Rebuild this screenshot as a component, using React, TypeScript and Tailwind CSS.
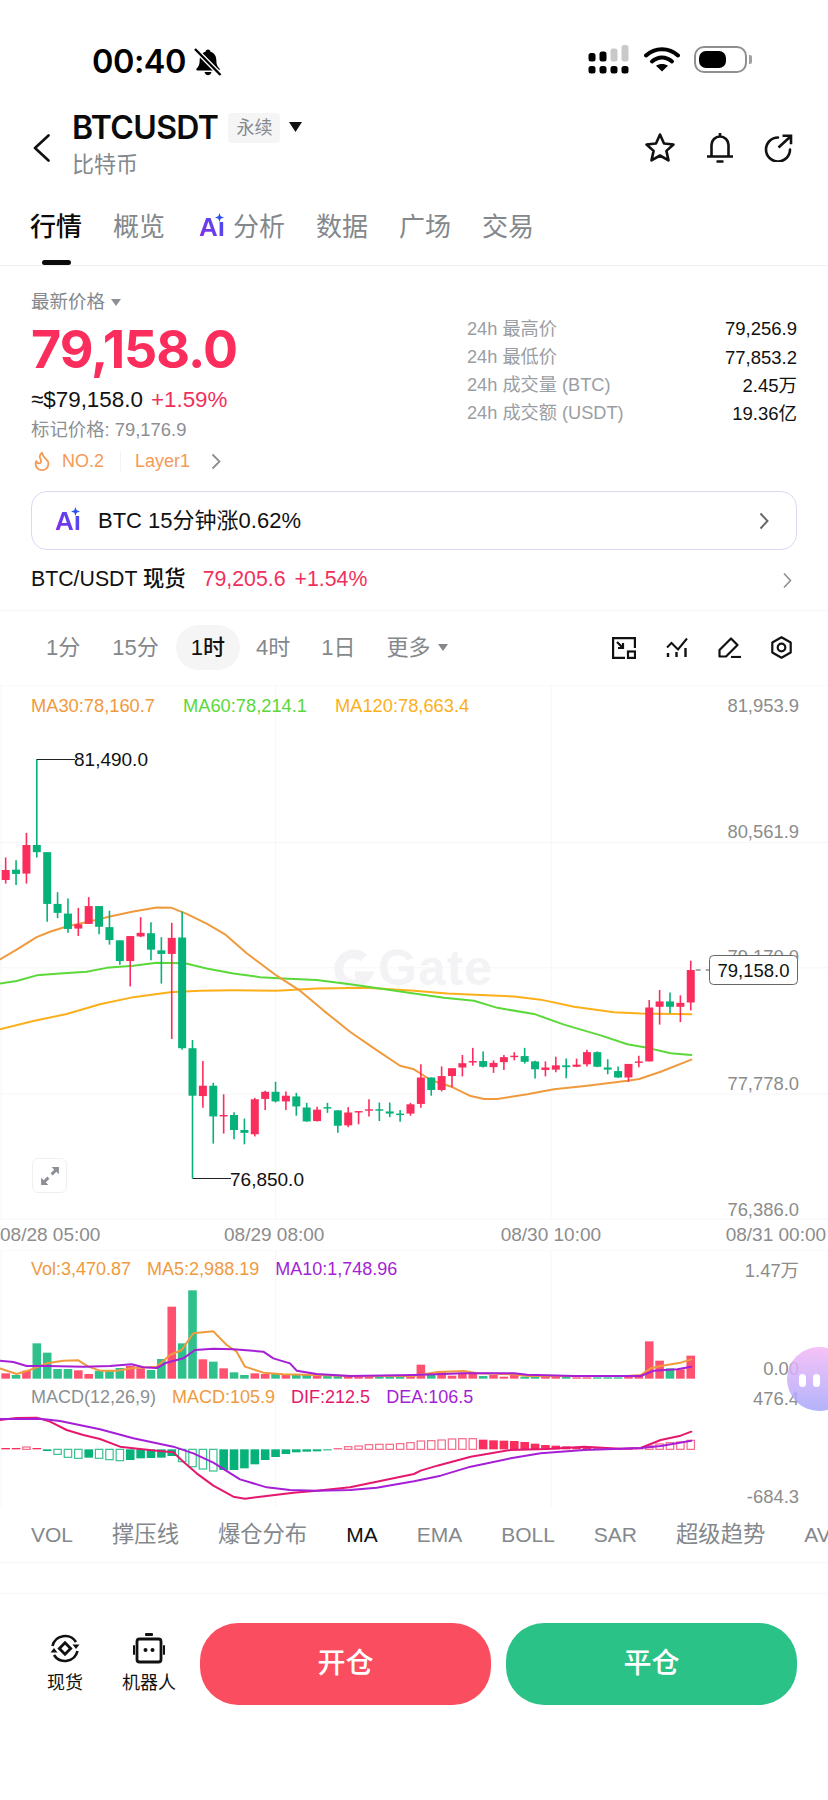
import { Flame } from 'lucide-react';

type Candle = [number, number, number, number, 'r' | 'g'];
type Pt = [number, number];

const RED = '#fb2d5c';
const GREEN = '#06b279';
const ORANGE = '#f09a3e';
const LIME = '#5bd83a';
const AMBER = '#fbb01a';
const PURPLE = '#a51fd6';
const PINK = '#e6186d';

// x position shared by candles and the bars under them
const cx = (i: number) => 5.67 + 10.38 * i;
const cy = (v: number) => 680 + v / 2.8;
const sy = (v: number) => 1240 + v / 3;

const candles: Candle[] = [
  [532, 560, 497, 570, 'r'], [531, 543, 505, 574, 'g'], [462, 542, 428, 570, 'r'], [462, 482, 222, 497, 'g'],
  [482, 627, 482, 677, 'g'], [627, 652, 594, 667, 'g'], [654, 697, 612, 708, 'g'], [684, 696, 638, 717, 'r'],
  [633, 683, 608, 683, 'r'], [633, 691, 633, 712, 'g'], [692, 728, 646, 741, 'g'], [729, 787, 729, 797, 'g'],
  [717, 787, 717, 858, 'r'], [708, 718, 664, 720, 'r'], [709, 755, 678, 785, 'g'], [757, 767, 720, 850, 'g'],
  [722, 767, 680, 1005, 'r'], [721, 1031, 648, 1035, 'g'], [1031, 1164, 1008, 1396, 'g'], [1136, 1165, 1067, 1198, 'r'],
  [1136, 1222, 1128, 1298, 'g'], [1218, 1222, 1160, 1270, 'r'], [1218, 1260, 1210, 1286, 'g'], [1260, 1268, 1228, 1300, 'g'],
  [1174, 1272, 1170, 1278, 'r'], [1153, 1173, 1150, 1204, 'r'], [1153, 1180, 1125, 1183, 'g'], [1164, 1180, 1152, 1204, 'r'],
  [1166, 1194, 1156, 1220, 'g'], [1197, 1236, 1184, 1237, 'g'], [1203, 1235, 1195, 1236, 'r'], [1196, 1200, 1184, 1212, 'g'],
  [1205, 1248, 1205, 1268, 'g'], [1211, 1247, 1196, 1252, 'r'], [1207, 1211, 1207, 1244, 'r'], [1202, 1206, 1174, 1222, 'r'],
  [1202, 1206, 1183, 1235, 'g'], [1208, 1214, 1183, 1224, 'g'], [1214, 1218, 1204, 1237, 'g'], [1188, 1214, 1184, 1220, 'r'],
  [1113, 1187, 1076, 1198, 'r'], [1113, 1148, 1113, 1164, 'g'], [1109, 1148, 1082, 1152, 'r'], [1087, 1109, 1087, 1140, 'r'],
  [1073, 1085, 1050, 1110, 'r'], [1067, 1071, 1030, 1080, 'r'], [1067, 1083, 1040, 1085, 'g'], [1072, 1084, 1065, 1100, 'r'],
  [1056, 1070, 1050, 1092, 'r'], [1052, 1056, 1042, 1065, 'r'], [1053, 1069, 1030, 1074, 'g'], [1068, 1090, 1066, 1116, 'g'],
  [1085, 1092, 1068, 1110, 'r'], [1079, 1091, 1055, 1098, 'r'], [1079, 1084, 1060, 1115, 'g'], [1077, 1083, 1060, 1084, 'r'],
  [1042, 1076, 1035, 1082, 'r'], [1042, 1083, 1040, 1084, 'g'], [1085, 1091, 1062, 1104, 'g'], [1095, 1113, 1082, 1114, 'g'],
  [1075, 1113, 1075, 1125, 'r'], [1068, 1072, 1052, 1084, 'r'], [917, 1068, 896, 1068, 'r'], [900, 915, 868, 965, 'r'],
  [900, 915, 875, 933, 'g'], [904, 915, 883, 958, 'r'], [812, 903, 786, 925, 'r'],
];

const ma30: Pt[] = [[0,782],[50,755],[110,720],[150,705],[200,690],[260,678],[330,662],[400,648],[470,637],[515,638],[560,655],[620,682],[675,712],[740,765],[830,828],[900,870],[970,925],[1050,985],[1120,1030],[1200,1080],[1242,1090],[1292,1120],[1352,1138],[1412,1165],[1452,1173],[1492,1173],[1582,1160],[1662,1146],[1762,1136],[1882,1122],[1918,1117],[1982,1097],[2074,1063]];
const ma60: Pt[] = [[0,850],[50,843],[110,827],[180,822],[260,817],[320,806],[400,800],[470,792],[555,793],[620,808],[700,822],[780,832],[850,836],[950,840],[1050,852],[1150,865],[1242,878],[1332,890],[1422,898],[1492,918],[1602,935],[1692,965],[1802,995],[1882,1020],[1942,1030],[2012,1045],[2074,1050]];
const ma120: Pt[] = [[0,978],[100,955],[200,935],[300,908],[400,888],[510,874],[600,870],[700,869],[830,870],[950,864],[1100,862],[1242,870],[1342,878],[1442,882],[1542,886],[1622,895],[1722,915],[1842,930],[1922,934],[2074,936]];

const vols: [number, 'r' | 'g'][] = [
  [400,'r'],[405,'g'],[392,'r'],[310,'g'],[338,'g'],[387,'g'],[387,'g'],[391,'r'],[402,'r'],[392,'g'],[392,'g'],[384,'g'],[378,'r'],[385,'r'],[390,'g'],[357,'g'],[200,'r'],[310,'g'],[151,'g'],[358,'r'],[365,'g'],[385,'r'],[397,'g'],[405,'g'],[400,'r'],[402,'r'],[400,'g'],[402,'r'],[405,'g'],[405,'g'],[408,'r'],[408,'g'],[408,'g'],[408,'r'],[408,'r'],[408,'r'],[410,'g'],[410,'g'],[410,'g'],[408,'r'],
  [374,'r'],[402,'g'],[395,'r'],[407,'r'],[398,'r'],[398,'r'],[408,'g'],[405,'r'],[410,'r'],[405,'r'],[410,'g'],[410,'g'],[408,'r'],[408,'r'],[408,'g'],[412,'r'],[412,'r'],[412,'g'],[412,'g'],[412,'g'],[408,'r'],[408,'r'],[304,'r'],[362,'r'],[385,'g'],[388,'r'],[347,'r'],
];
const volMa5: Pt[] = [[0,385],[50,402],[90,390],[140,370],[190,362],[235,361],[265,380],[300,392],[350,392],[400,384],[470,380],[510,345],[545,330],[580,280],[640,274],[680,315],[710,335],[735,380],[790,398],[850,403],[950,405],[1050,408],[1242,408],[1312,396],[1392,393],[1432,400],[1542,403],[1582,408],[1882,408],[1922,405],[1952,385],[1982,378],[2042,368],[2074,358]];
const volMa10: Pt[] = [[0,362],[40,366],[80,378],[140,378],[250,380],[330,378],[395,373],[430,382],[470,384],[500,368],[550,355],[585,330],[640,326],[700,328],[790,335],[820,355],[870,370],[890,392],[950,402],[1050,408],[1242,405],[1392,400],[1542,400],[1582,404],[1722,408],[1922,408],[1962,392],[2032,388],[2074,380]];

// [zoomed y of the bar's far end, hollow]
const macdBars: [number, boolean][] = [
  [624,false],[624,false],[621,true],[624,false],[633,false],[643,true],[652,true],[655,true],[653,false],[655,true],[659,true],[662,true],[660,false],[655,false],[654,false],[653,false],[648,false],[665,true],[680,true],[687,true],[693,true],[690,false],[690,false],[685,false],[673,false],[660,false],[651,false],[642,false],[637,false],[635,false],[634,false],[630,false],[625,false],[620,true],[618,true],[614,true],[613,true],[613,true],[611,true],[608,true],
  [603,true],[602,true],[600,true],[597,true],[596,true],[596,true],[599,false],[601,false],[602,false],[603,false],[606,false],[611,false],[615,false],[617,false],[619,false],[622,false],[623,false],[625,false],[626,false],[626,false],[626,false],[625,false],[618,true],[612,true],[608,true],[606,true],[601,true],
];
const dif: Pt[] = [[0,540],[50,534],[110,533],[150,545],[200,570],[250,585],[300,597],[360,620],[420,627],[470,632],[520,637],[550,665],[590,700],[640,737],[700,770],[735,776],[800,768],[880,758],[950,752],[1050,742],[1130,725],[1242,702],[1262,692],[1312,677],[1412,650],[1532,630],[1642,627],[1752,620],[1862,626],[1922,624],[1982,600],[2042,587],[2074,575]];
const dea: Pt[] = [[0,537],[120,536],[180,543],[300,568],[400,595],[520,620],[580,640],[640,668],[720,718],[800,742],[870,750],[950,752],[1050,750],[1130,743],[1242,724],[1322,707],[1412,680],[1532,655],[1622,640],[1752,630],[1862,626],[1922,624],[1982,618],[2074,602]];

const toPoints = (pts: Pt[], my: (v: number) => number) => pts.map(([x, v]) => `${x / 3},${my(v)}`).join(' ');

function Line({ pts, color, my }: { pts: Pt[]; color: string; my: (v: number) => number }) {
  return <polyline points={toPoints(pts, my)} fill="none" stroke={color} strokeWidth={2} strokeLinejoin="round" strokeLinecap="round" />;
}

function AxisLabel({ y, children }: { y: number; children: string }) {
  return (
    <text x={799} y={y + 6.5} textAnchor="end" fontSize={18.4} fill="#8c8c8c">
      {children}
    </text>
  );
}

function TimeLabel({ x, children }: { x: number; children: string }) {
  return (
    <text x={x} y={1241} fontSize={19} fill="#8c8c8c">
      {children}
    </text>
  );
}

function GridV({ y1, y2 }: { y1: number; y2: number }) {
  return (
    <>
      <line x1={1} x2={1} y1={y1} y2={y2} stroke="#f6f6f8" />
      <line x1={275.7} x2={275.7} y1={y1} y2={y2} stroke="#f6f6f8" />
      <line x1={551} x2={551} y1={y1} y2={y2} stroke="#f6f6f8" />
    </>
  );
}

function AiMark() {
  return (
    <span className="relative inline-block w-[25px] h-[30px] shrink-0">
      <span className="text-[26px] leading-[30px] font-bold bg-linear-to-tr from-[#8a1fe6] to-[#2a50f0] bg-clip-text text-transparent">Aı</span>
      <svg className="absolute right-0 top-[1px]" width="9" height="9" viewBox="0 0 10 10">
        <path d="M5 0 6.3 3.7 10 5 6.3 6.3 5 10 3.7 6.3 0 5 3.7 3.7Z" fill="#2a50f0" />
      </svg>
    </span>
  );
}

function StatusBar() {
  return (
    <div className="h-[104px] pt-[44px] pl-[92px] pr-[76px] flex justify-between items-start">
      <div className="h-[36px] flex items-center">
        <span className="font-['Inter'] text-[32.500px] font-semibold tracking-[-0.5px] text-black">00:40</span>
        <svg className="ml-[8px]" width="28" height="28" viewBox="0 0 28 28">
          <path d="M14 1.5c1.5 0 2.3 1 2.5 2.2 4 1.2 5.8 4.5 5.8 8.3 0 4.5 1 6.5 3.2 8.8.6.7.2 1.7-.8 1.7H3.3c-1 0-1.4-1-.8-1.7C4.700 18.500 5.700 16.500 5.700 12c0-3.800 1.800-7.100 5.800-8.300C11.700 2.500 12.500 1.500 14 1.500Z" fill="#000" />
          <path d="M10.500 24h7c-.4 2-1.800 3.200-3.500 3.200s-3.100-1.200-3.500-3.200Z" fill="#000" />
          <path d="M1.500 1.500 26 26.500" stroke="#fff" strokeWidth="5" />
          <path d="M1 1 26.500 27" stroke="#000" strokeWidth="2.400" />
        </svg>
      </div>
      <div className="h-[30px] flex items-center">
        <svg width="41" height="29" viewBox="0 0 41 29">
          <rect x="0.500" y="8" width="7" height="8.500" rx="2.500" fill="#000" />
          <rect x="11.500" y="6.500" width="7" height="10" rx="2.500" fill="#000" />
          <rect x="22.500" y="3.500" width="7" height="13" rx="2.500" fill="#c9c9c9" />
          <rect x="33.500" y="0" width="7" height="16.500" rx="2.500" fill="#c9c9c9" />
          <rect x="0.500" y="21" width="7" height="7.500" rx="2.500" fill="#000" />
          <rect x="11.500" y="21" width="7" height="7.500" rx="2.500" fill="#000" />
          <rect x="22.500" y="21" width="7" height="7.500" rx="2.500" fill="#000" />
          <rect x="33.500" y="21" width="7" height="7.500" rx="2.500" fill="#000" />
        </svg>
        <svg className="ml-[15px]" width="36" height="26" viewBox="0 0 36 26">
          <path d="M2 9.500C11 1 25 1 34 9.500" fill="none" stroke="#000" strokeWidth="4" strokeLinecap="round" />
          <path d="M8 15.500C14 10 22 10 28 15.500" fill="none" stroke="#000" strokeWidth="4" strokeLinecap="round" />
          <path d="M18 25.500 12 19.800C15.500 17.300 20.500 17.300 24 19.800Z" fill="#000" />
        </svg>
        <div className="ml-[14px] w-[53px] h-[27px] rounded-[10px] border-[2px] border-[#8f8f8f] p-[3px]">
          <div className="w-[27px] h-full rounded-[7px] bg-black" />
        </div>
        <div className="ml-[2px] w-[3px] h-[9px] rounded-r-[2px] bg-[#a0a0a0]" />
      </div>
    </div>
  );
}

function Header() {
  return (
    <div className="h-[76px] flex items-start pl-[33px] pr-[35px]">
      <svg className="mt-[30px]" width="17" height="28" viewBox="0 0 17 28">
        <path d="M15.500 1.500 2 14l13.500 12.500" fill="none" stroke="#111" strokeWidth="2.600" strokeLinecap="round" strokeLinejoin="round" />
      </svg>
      <div className="ml-[22px] mt-[9px]">
        <div className="flex items-center h-[30px]">
          <span className="font-['Inter'] text-[32px] font-semibold tracking-[-0.6px] text-[#0b0b0b] leading-[30px]">BTCUSDT</span>
          <span className="ml-[10px] w-[52px] h-[30px] rounded-[4px] bg-[#f5f5f5] text-[#84888c] text-[18px] flex items-center justify-center">永续</span>
          <svg className="ml-[9px] mb-[3px]" width="13" height="10" viewBox="0 0 13 10"><path d="M0 0h13L6.500 10Z" fill="#111" /></svg>
        </div>
        <div className="mt-[9px] text-[22px] leading-[26px] text-[#84888c]">比特币</div>
      </div>
      <div className="ml-auto mt-[28px] flex items-center gap-[30px]">
        <svg width="32" height="31" viewBox="0 0 32 31">
          <path d="M16 2.500 20 11.500l9.500 1-7.100 6.400 2.100 9.500L16 23.500l-8.500 4.900 2.100-9.500L2.500 12.500l9.500-1Z" fill="none" stroke="#111" strokeWidth="2.600" strokeLinejoin="round" />
        </svg>
        <svg width="28" height="31" viewBox="0 0 28 31">
          <path d="M5.500 24V13a8.500 8.500 0 0 1 17 0v11" fill="none" stroke="#111" strokeWidth="2.600" />
          <path d="M1 24.500h26M10.500 29.500h7M14 1v3" stroke="#111" strokeWidth="2.600" />
        </svg>
        <svg width="29" height="28" viewBox="0 0 29 28">
          <path d="M14 3.500A12 12 0 1 0 26 15.500" fill="none" stroke="#111" strokeWidth="2.600" strokeLinecap="round" />
          <path d="M14.500 13.500 26.500 2.500M18.500 1.800h8.500v8.500" fill="none" stroke="#111" strokeWidth="2.600" />
        </svg>
      </div>
    </div>
  );
}

function Tabs() {
  const cls = 'text-[26px] leading-[34px] text-[#84888c]';
  return (
    <div className="h-[86px] pt-[30px] pl-[30px] flex items-start gap-[31px] border-b border-[#f0f0f0]">
      <div className="flex flex-col items-center">
        <span className="text-[26px] leading-[34px] font-medium text-[#0b0b0b]">行情</span>
        <span className="mt-[16px] w-[29px] h-[5px] rounded-[3px] bg-[#0b0b0b]" />
      </div>
      <span className={cls}>概览</span>
      <span className="ml-[3px] flex items-center gap-[9px]">
        <AiMark />
        <span className={cls}>分析</span>
      </span>
      <span className={cls}>数据</span>
      <span className={cls}>广场</span>
      <span className={cls}>交易</span>
    </div>
  );
}

function PriceSection() {
  const stats = [
    ['24h 最高价', '79,256.9'],
    ['24h 最低价', '77,853.2'],
    ['24h 成交量 (BTC)', '2.45万'],
    ['24h 成交额 (USDT)', '19.36亿'],
  ];
  return (
    <div className="px-[31px] pb-[18px] flex justify-between">
      <div className="pt-[24px]">
        <div className="h-[24px] flex items-center text-[18.500px] text-[#84888c]">
          最新价格
          <svg className="ml-[6px]" width="10" height="7" viewBox="0 0 10 7"><path d="M0 0h10L5 7Z" fill="#8c8f93" /></svg>
        </div>
        <div className="mt-[8px] h-[56px] font-['Inter'] text-[52px] leading-[56px] font-bold tracking-[-1px] text-[#fb2d5c]">79,158.0</div>
        <div className="mt-[8px] h-[28px] text-[22.400px] leading-[28px] flex items-center gap-[8px]">
          <span className="text-[#111]">≈$79,158.0</span>
          <span className="text-[#f0305c]">+1.59%</span>
        </div>
        <div className="mt-[4px] h-[24px] text-[18.400px] leading-[24px] text-[#8c8f93]">标记价格: 79,176.9</div>
        <div className="mt-[7px] h-[24px] flex items-center text-[18px] text-[#f59a57]">
          <Flame size={22} strokeWidth={2} className="text-[#f59a57]" />
          <span className="ml-[9px]">NO.2</span>
          <span className="ml-[16px] w-px h-[20px] bg-[#f3f3f3]" />
          <span className="ml-[14px]">Layer1</span>
          <svg className="ml-[21px]" width="10" height="17" viewBox="0 0 10 17"><path d="M1.500 1.500 8.500 8.500l-7 7" fill="none" stroke="#8c8f93" strokeWidth="1.800" /></svg>
        </div>
      </div>
      <div className="w-[330px] pt-[49px]">
        {stats.map(([label, value]) => (
          <div key={label} className="h-[28.300px] flex items-center justify-between">
            <span className="text-[18.200px] text-[#9a9ea3]">{label}</span>
            <span className="text-[18.500px] text-[#111]">{value}</span>
          </div>
        ))}
      </div>
    </div>
  );
}

function AiBanner() {
  return (
    <div className="mx-[31px] h-[59px] pl-[23px] pr-[27px] rounded-[16px] border border-[#dcd8f4] flex items-center">
      <AiMark />
      <span className="ml-[18px] text-[22px] text-[#111]">BTC 15分钟涨0.62%</span>
      <svg className="ml-auto" width="10" height="18" viewBox="0 0 10 18"><path d="M1.500 1.500 8.500 9l-7 7.500" fill="none" stroke="#666" strokeWidth="2" /></svg>
    </div>
  );
}

function SpotRow() {
  return (
    <div className="h-[61px] pl-[31px] pr-[36px] flex items-center text-[21.300px] border-b border-[#f7f7f7]">
      <span className="font-medium text-[#111]">BTC/USDT 现货</span>
      <span className="ml-[17px] text-[#f0305c]">79,205.6</span>
      <span className="ml-[9px] text-[#f0305c]">+1.54%</span>
      <svg className="ml-auto" width="9" height="17" viewBox="0 0 9 17"><path d="M1 1.500 7.500 8.500 1 15.500" fill="none" stroke="#8c8f93" strokeWidth="1.600" /></svg>
    </div>
  );
}

function Intervals() {
  const item = 'px-[15px] h-[45px] flex items-center text-[22px] text-[#84888c]';
  return (
    <div className="h-[74px] pt-[14px] pl-[31px] pr-[36px] flex items-start gap-[2px]">
      <span className={item}>1分</span>
      <span className={item}>15分</span>
      <span className="px-[15px] h-[45px] flex items-center text-[22px] font-medium text-[#111] rounded-full bg-[#f5f5f5]">1时</span>
      <span className={`${item} -ml-[1px]`}>4时</span>
      <span className={`${item} -ml-[1px]`}>1日</span>
      <span className={`${item} -ml-[1px]`}>
        更多
        <svg className="ml-[7px]" width="10" height="7" viewBox="0 0 10 7"><path d="M0 0h10L5 7Z" fill="#84888c" /></svg>
      </span>
      <div className="ml-auto h-[45px] flex items-center gap-[30px]">
        <svg width="24" height="22" viewBox="0 0 24 22" fill="none" stroke="#111" strokeWidth="2.200">
          <path d="M13 20.900H1.100V1.100h21.800V11" />
          <rect x="16" y="14.500" width="7" height="6.400" />
          <path d="M5 5l6 6M11 6v5H6" />
        </svg>
        <svg width="22" height="21" viewBox="0 0 22 21" fill="none" stroke="#111" strokeWidth="2">
          <path d="M1 10.500 5.500 6l6.500 6.500L21 1.500" />
          <path d="M2 16v4M10.500 15v5M19.500 11v9" strokeWidth="2.400" />
        </svg>
        <svg width="23" height="21" viewBox="0 0 23 21" fill="none" stroke="#111" strokeWidth="2.200" strokeLinejoin="round">
          <path d="M1.500 19.500V13L13 1.500 19.500 8 8 19.500Z" />
          <path d="M13 20h10" />
        </svg>
        <svg width="21" height="23" viewBox="0 0 21 23" fill="none" stroke="#111" strokeWidth="2.200" strokeLinejoin="round">
          <path d="M10.500 1.300 19.700 6.500v10l-9.200 5.200-9.200-5.200v-10Z" />
          <circle cx="10.500" cy="11.500" r="3.800" />
        </svg>
      </div>
    </div>
  );
}

function MainChart() {
  return (
    <div className="relative h-[565px]">
      <svg className="absolute inset-0" width="828" height="565" viewBox="0 685 828 565">
        <GridV y1={685} y2={1219} />
        {[685, 842.5, 967.9, 1094, 1219].map((y) => (
          <line key={y} x1={0} x2={828} y1={y} y2={y} stroke="#f6f6f8" />
        ))}
        {/* watermark */}
        <path d="M364 958a15 15 0 1 0 3 18h-12" fill="none" stroke="#f3f3f5" strokeWidth="9" />
        <text x={378} y={985} fontSize={50} fontWeight={700} letterSpacing={1} fill="#f3f3f5">Gate</text>

        <Line pts={ma120} color={AMBER} my={cy} />
        <Line pts={ma60} color={LIME} my={cy} />
        <Line pts={ma30} color={ORANGE} my={cy} />

        {candles.map(([top, bottom, wickTop, wickBottom, side], i) => {
          const color = side === 'r' ? RED : GREEN;
          const x = cx(i);
          return (
            <g key={i}>
              <line x1={x} x2={x} y1={cy(wickTop)} y2={cy(wickBottom)} stroke={color} strokeWidth={1.6} />
              <rect x={x - 4} y={cy(top)} width={8} height={cy(bottom) - cy(top)} fill={color} />
            </g>
          );
        })}

        <path d="M36.700 759.500H75" stroke="#222" strokeWidth={1.200} fill="none" />
        <text x={74} y={766} fontSize={19} fill="#111">81,490.0</text>
        <path d="M192.700 1178.500H231" stroke="#222" strokeWidth={1.200} fill="none" />
        <text x={230} y={1185.500} fontSize={19} fill="#111">76,850.0</text>

        <AxisLabel y={705.700}>81,953.9</AxisLabel>
        <AxisLabel y={831.800}>80,561.9</AxisLabel>
        <AxisLabel y={956.800}>79,170.0</AxisLabel>
        <AxisLabel y={1083.600}>77,778.0</AxisLabel>
        <AxisLabel y={1209}>76,386.0</AxisLabel>

        <line x1={695.700} x2={709} y1={970} y2={970} stroke="#555" strokeDasharray="5 5" />
        <rect x={709.500} y={955.500} width={88} height={29} rx={4} fill="#fff" stroke="#666" />
        <text x={753.500} y={976.500} textAnchor="middle" fontSize={18.500} fill="#111">79,158.0</text>

        <TimeLabel x={0}>08/28 05:00</TimeLabel>
        <TimeLabel x={224}>08/29 08:00</TimeLabel>
        <TimeLabel x={500.700}>08/30 10:00</TimeLabel>
        <TimeLabel x={725.700}>08/31 00:00</TimeLabel>
      </svg>
      <div className="absolute top-[10px] left-[31px] flex items-center h-[21px] gap-[28px] text-[18.300px] leading-[21px]">
        <span className="text-[#f09a3e]">MA30:78,160.7</span>
        <span className="text-[#5bd83a]">MA60:78,214.1</span>
        <span className="text-[#fbb01a]">MA120:78,663.4</span>
      </div>
      <div className="absolute left-[32px] top-[473px] w-[35px] h-[35px] rounded-[6px] border border-[#efefef] bg-white flex items-center justify-center">
        <svg width="20" height="20" viewBox="0 0 18 18" fill="#8c8f93">
          <path d="M10.500 1H17v6.500l-2.300-2.300-3.300 3.300-1.900-1.900 3.300-3.300Z" />
          <path d="M7.500 17H1v-6.500l2.300 2.300 3.300-3.300 1.900 1.900-3.300 3.300Z" />
        </svg>
      </div>
    </div>
  );
}

function VolumePanel() {
  return (
    <div className="relative h-[135px]">
      <svg className="absolute inset-0" width="828" height="135" viewBox="0 1250 828 135">
        <line x1={0} x2={828} y1={1250} y2={1250} stroke="#f6f6f8" />
        <GridV y1={1250} y2={1385} />
        {vols.map(([top, side], i) => (
          <rect key={i} x={cx(i) - 4.300} y={sy(top)} width={8.600} height={sy(416) - sy(top)} fill={side === 'r' ? '#ff5271' : '#2fc08c'} />
        ))}
        <Line pts={volMa5} color={ORANGE} my={sy} />
        <Line pts={volMa10} color={PURPLE} my={sy} />
        <AxisLabel y={1270}>1.47万</AxisLabel>
        <AxisLabel y={1368}>0.00</AxisLabel>
      </svg>
      <div className="absolute top-[9px] left-[31px] flex items-center h-[21px] gap-[16px] text-[18px] leading-[21px]">
        <span className="text-[#f09a3e]">Vol:3,470.87</span>
        <span className="text-[#f09a3e]">MA5:2,988.19</span>
        <span className="text-[#a51fd6]">MA10:1,748.96</span>
      </div>
    </div>
  );
}

function MacdPanel() {
  return (
    <div className="relative h-[122px]">
      <svg className="absolute inset-0" width="828" height="122" viewBox="0 1385 828 122">
        <GridV y1={1385} y2={1507} />
        {macdBars.map(([end, hollow], i) => {
          const up = end < 628;
          const y1 = sy(Math.min(end, 628));
          const h = Math.max(Math.abs(sy(end) - sy(628)), 1);
          const color = up ? '#fb2d5c' : '#06b279';
          return hollow ? (
            <rect key={i} x={cx(i) - 3.700} y={y1} width={7.400} height={h} fill="#fff" stroke={up ? '#f5698a' : '#38c08f'} strokeWidth={1.200} />
          ) : (
            <rect key={i} x={cx(i) - 4.300} y={y1} width={8.600} height={h} fill={color} />
          );
        })}
        <Line pts={dif} color={PINK} my={sy} />
        <Line pts={dea} color={PURPLE} my={sy} />
        <AxisLabel y={1398}>476.4</AxisLabel>
        <AxisLabel y={1496}>-684.3</AxisLabel>
      </svg>
      <div className="absolute top-[2px] left-[31px] flex items-center h-[21px] gap-[16px] text-[18px] leading-[21px]">
        <span className="text-[#8c8f93]">MACD(12,26,9)</span>
        <span className="text-[#f09a3e]">MACD:105.9</span>
        <span className="text-[#e6186d]">DIF:212.5</span>
        <span className="text-[#a51fd6]">DEA:106.5</span>
      </div>
    </div>
  );
}

function Indicators() {
  const names = ['VOL', '撑压线', '爆仓分布', 'MA', 'EMA', 'BOLL', 'SAR', '超级趋势', 'AVL'];
  return (
    <div className="h-[56px] pl-[31px] flex items-center gap-[39px] whitespace-nowrap overflow-hidden border-b border-[#f7f7f7]">
      {names.map((n) => (
        <span
          key={n}
          className={n === 'MA' ? 'text-[21px] text-[#111]' : /^[A-Z]+$/.test(n) ? 'text-[21px] text-[#84888c]' : 'text-[22.300px] text-[#84888c]'}
        >
          {n}
        </span>
      ))}
    </div>
  );
}

function BottomBar() {
  return (
    <div className="mt-[30px] pt-[29px] border-t border-[#f7f7f7] pl-[47px] flex items-start">
      <div className="pt-[10px] flex flex-col items-center w-[36px]">
        <svg width="32" height="31" viewBox="0 0 32 31" fill="none" stroke="#111" strokeWidth="2.600">
          <path d="M3.500 13A13 13 0 0 1 27 9" />
          <path d="M28.500 18A13 13 0 0 1 5 22" />
          <path d="M23.500 11.500h7l-3.500 4.500ZM8.500 19.500h-7l3.500-4.500Z" fill="#111" stroke="none" />
          <rect x="12" y="11.500" width="8" height="8" transform="rotate(45 16 15.500)" strokeWidth="2.800" />
        </svg>
        <span className="mt-[8px] text-[18px] leading-[22px] text-[#111] whitespace-nowrap">现货</span>
      </div>
      <div className="ml-[39px] pt-[10px] flex flex-col items-center w-[54px]">
        <svg width="32" height="31" viewBox="0 0 32 31">
          <rect x="12" y="0" width="8" height="3" rx="1" fill="#111" />
          <rect x="4" y="6" width="24" height="23" rx="2.500" fill="none" stroke="#111" strokeWidth="2.800" />
          <rect x="0" y="12" width="2" height="10" rx="1" fill="#111" />
          <rect x="30" y="12" width="2" height="10" rx="1" fill="#111" />
          <circle cx="12.500" cy="17" r="2" fill="#111" />
          <circle cx="19.500" cy="17" r="2" fill="#111" />
        </svg>
        <span className="mt-[8px] text-[18px] leading-[22px] text-[#111] whitespace-nowrap">机器人</span>
      </div>
      <button className="ml-[24px] w-[291px] h-[82px] rounded-[38px] bg-[#fb4d60] text-white text-[28px] font-medium">开仓</button>
      <button className="ml-[15px] w-[291px] h-[82px] rounded-[38px] bg-[#2bc287] text-white text-[28px] font-medium">平仓</button>
    </div>
  );
}

export default function App() {
  return (
    <div className="relative w-[828px] h-[1800px] overflow-hidden bg-white font-['Liberation_Sans','Noto_Sans_CJK_SC',sans-serif]">
      <StatusBar />
      <Header />
      <Tabs />
      <PriceSection />
      <AiBanner />
      <SpotRow />
      <Intervals />
      <MainChart />
      <VolumePanel />
      <MacdPanel />
      <Indicators />
      <BottomBar />
      {/* floating assistant bubble */}
      <div className="absolute left-[787px] top-[1347px] w-[64px] h-[64px] rounded-full opacity-85 bg-linear-to-b from-[#f4b8f6] to-[#a6a6fb] flex items-center justify-center gap-[7px] pr-[20px] pt-[2px]">
        <span className="w-[7px] h-[13px] rounded-full bg-white" />
        <span className="w-[7px] h-[13px] rounded-full bg-white" />
      </div>
    </div>
  );
}
